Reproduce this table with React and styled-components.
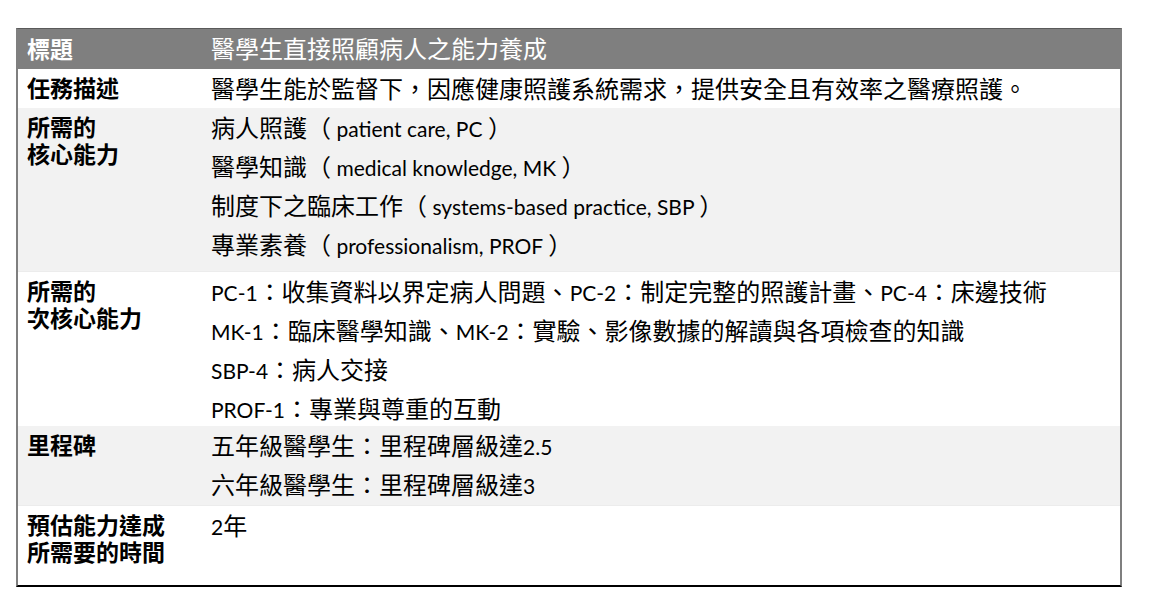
import React from 'react';
import styled, { createGlobalStyle } from 'styled-components';

const GlobalStyle = createGlobalStyle`
    body {
        margin: 0;
        background: #ffffff;
        font-family: "Lato", "Noto Sans CJK TC", sans-serif;
        color: #000000;
    }
`

const Table = styled.div`
    margin: 28px 0 0 16px;
    width: 1102px;
    border-top: 1px solid #5a5a5a;
    border-left: 2px solid #7f7f7f;
    border-right: 2px solid #7f7f7f;
    border-bottom: 2px solid #000000;
`

const Row = styled.div`
    display: grid;
    grid-template-columns: 184px 1fr;
    height: ${props => props.h}px;
    background: ${props => props.shade ? '#f2f2f2' : '#ffffff'};
    border-bottom: ${props => props.shade ? '1px solid #ececec' : 'none'};
    box-sizing: border-box;
`

const HeadRow = styled(Row)`
    background: #7f7f7f;
    color: #ffffff;
    align-items: center;
`

const Label = styled.div`
    padding: 6px 0 0 9px;
    font-size: 23px;
    font-weight: 700;
    line-height: 27px;
`

const HeadLabel = styled.div`
    padding-left: 9px;
    font-size: 23px;
    font-weight: 700;
    line-height: 40px;
`

const Content = styled.div`
    padding-left: 9px;
    font-size: 24px;
    line-height: 39px;
    white-space: nowrap;
`

const HeadContent = styled(Content)`
    line-height: 40px;
`

const LabelLine = styled.div``

const Line = styled.div`
    height: 39px;
`

// latin runs are set a bit smaller, as the narrow latin face of the original
const En = styled.span`
    font-size: 21px;
    line-height: 1;
`

const Mixed = ({ text }) => (
    <>
        {text.split(/([\x20-\x7E]+)/).map((part, i) =>
            /^[\x20-\x7E]+$/.test(part) ? <En key={i}>{part}</En> : part
        )}
    </>
)

const rows = [
    { label: ['任務描述'], lines: ['醫學生能於監督下，因應健康照護系統需求，提供安全且有效率之醫療照護。'], h: 39 },
    {
        label: ['所需的', '核心能力'],
        lines: [
            '病人照護（ patient care, PC ）',
            '醫學知識（ medical knowledge, MK ）',
            '制度下之臨床工作（ systems-based practice, SBP ）',
            '專業素養（ professionalism, PROF ）',
        ],
        h: 164,
        shade: true,
    },
    {
        label: ['所需的', '次核心能力'],
        lines: [
            'PC-1：收集資料以界定病人問題、PC-2：制定完整的照護計畫、PC-4：床邊技術',
            'MK-1：臨床醫學知識、MK-2：實驗、影像數據的解讀與各項檢查的知識',
            'SBP-4：病人交接',
            'PROF-1：專業與尊重的互動',
        ],
        h: 154,
    },
    {
        label: ['里程碑'],
        lines: ['五年級醫學生：里程碑層級達2.5', '六年級醫學生：里程碑層級達3'],
        h: 80,
        shade: true,
    },
    { label: ['預估能力達成', '所需要的時間'], lines: ['2年'], h: 79 },
]

const App = () => {
    return (
        <>
            <GlobalStyle />
            <Table>
                <HeadRow h={40}>
                    <HeadLabel>標題</HeadLabel>
                    <HeadContent>醫學生直接照顧病人之能力養成</HeadContent>
                </HeadRow>
                {rows.map((r, i) => (
                    <Row key={i} h={r.h} shade={r.shade}>
                        <Label>
                            {r.label.map((l, j) => <LabelLine key={j}>{l}</LabelLine>)}
                        </Label>
                        <Content>
                            {r.lines.map((l, j) => <Line key={j}><Mixed text={l} /></Line>)}
                        </Content>
                    </Row>
                ))}
            </Table>
        </>
    );
}

export default App;
